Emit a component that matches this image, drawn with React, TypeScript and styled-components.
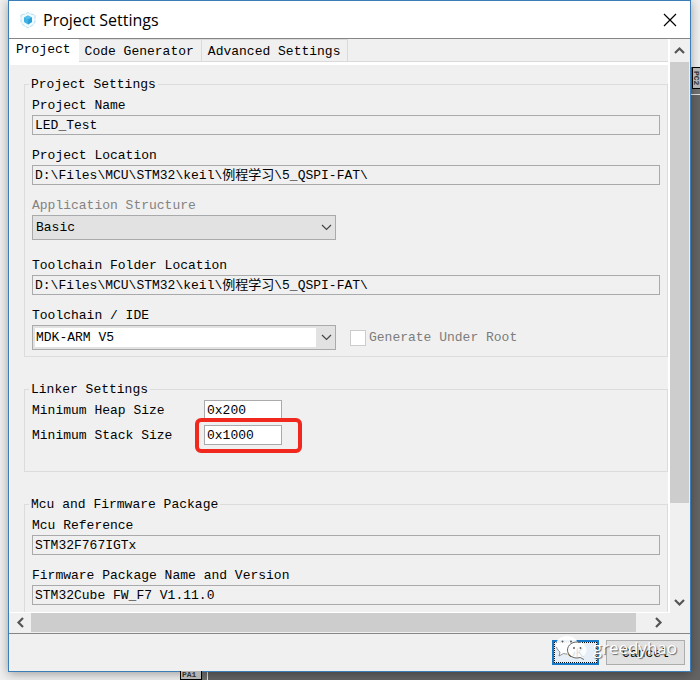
import React, { ReactNode } from "react";
import styled, { createGlobalStyle } from "styled-components";

const mono = `"Liberation Mono", "Noto Sans CJK SC", monospace`;
const ui = `"Open Sans", "Noto Sans", sans-serif`;

const GlobalStyle = createGlobalStyle`
  *, *::before, *::after { box-sizing: border-box; }
  body { margin: 0; }
  button, input, select { font: inherit; color: inherit; margin: 0; }
`;

const Desktop = styled.div`
  position: relative;
  display: flex;
  flex-direction: column;
  height: 100vh;
  min-height: 400px;
  padding: 0 9px 8px 8px;
  overflow: hidden;
  background: #f0f0f0;
  font: 13px/20px ${mono};
  color: #000;
`;

const Chip = styled.div`
  position: absolute;
  top: 94px;
  left: 207px;
  right: 0;
  bottom: 0;
  border: solid #e4e4e4;
  border-width: 1px 0 0 1px;
  background: #646464;
`;

const PinEdge = styled.div<{ $side: "right" | "bottom" }>`
  position: absolute;
  background: #707070;
  ${(p) =>
    p.$side === "right"
      ? "top: 67px; right: 0; width: 9px; height: 27px;"
      : "left: 180px; bottom: 0; width: 27px; height: 9px;"}
`;

const Pin = styled.div<{ $side: "right" | "bottom" }>`
  position: absolute;
  border: 1px solid #000;
  background: #b4b4b4;
  color: #333;
  font: bold 8px/8px ${mono};
  ${(p) =>
    p.$side === "right"
      ? "top: 67px; right: 0; width: 8px; height: 22px; border-right: 0; padding: 3px 0 0; writing-mode: vertical-rl; line-height: 7px;"
      : "left: 180px; bottom: 0; width: 22px; height: 9px; padding: 0 1px; border-top: 0;"}
`;

const Dialog = styled.section`
  position: relative;
  flex: 1;
  min-height: 0;
  display: flex;
  flex-direction: column;
  border: 1px solid #3c7fb8;
  background: #f0f0f0;
  box-shadow: 0 2px 10px rgba(0, 0, 0, 0.35);
`;

const TitleBar = styled.header`
  display: flex;
  align-items: center;
  gap: 7px;
  height: 38px;
  padding: 0 10px 0 11px;
  background: #fff;
  border-bottom: 1px solid #868686;
`;

const Title = styled.h1`
  flex: 1;
  margin: 0;
  font: 16px/20px ${ui};
  color: #000;
`;

const CloseButton = styled.button`
  display: flex;
  align-items: center;
  justify-content: center;
  width: 20px;
  height: 20px;
  padding: 0;
  border: 0;
  background: none;
`;

const Main = styled.div`
  flex: 1;
  min-height: 0;
  display: flex;
  padding-right: 1px;
  border-left: 1px solid #fff;
`;

const Viewport = styled.div`
  flex: 1;
  min-width: 0;
  display: flex;
  flex-direction: column;
  overflow: hidden;
  border-right: 2px solid #fff;
  border-bottom: 1px solid #fff;
`;

const Tabs = styled.div`
  display: flex;
  flex-shrink: 0;
  height: 26px;
  border-bottom: 3px solid #fff;
`;

const Tab = styled.button<{ $active?: boolean }>`
  height: 23px;
  padding: ${(p) => (p.$active ? "0 8px 2px 6px" : "2px 7px 0 6px")};
  border: solid #dadada;
  border-width: ${(p) => (p.$active ? "0" : "1px 1px 1px 0")};
  background: ${(p) => (p.$active ? "#fff" : "#f0f0f0")};
  line-height: 20px;
  white-space: nowrap;
`;

const TabRule = styled.div`
  flex: 1;
  height: 23px;
  border-bottom: 1px solid #dadada;
`;

const Page = styled.form`
  flex: 1;
  min-height: 0;
  display: flex;
  flex-direction: column;
  gap: 22px;
  padding: 9px 0 0 14px;
  overflow: hidden;
`;

const Group = styled.fieldset<{ $bottom: number }>`
  flex-shrink: 0;
  min-width: 0;
  margin: 0;
  padding: 1px 7px ${(p) => p.$bottom}px;
  border: 1px solid #dcdcdc;
`;

const Legend = styled.legend`
  margin-left: -3px;
  padding: 0 2px;
  height: 20px;
  line-height: 22px;
`;

const Fields = styled.div<{ $gap: number }>`
  display: flex;
  flex-direction: column;
  gap: ${(p) => p.$gap}px;
`;

const Stack = styled.div<{ $extra?: number }>`
  display: flex;
  flex-direction: column;
  margin-bottom: ${(p) => p.$extra ?? 0}px;
`;

const Label = styled.label<{ $muted?: boolean }>`
  height: 20px;
  color: ${(p) => (p.$muted ? "#838383" : "inherit")};
  line-height: 22px;
`;

const TextBox = styled.input<{ $editable?: boolean }>`
  width: ${(p) => (p.$editable ? "78px" : "100%")};
  height: 20px;
  padding: 1px 2px 0;
  border: 1px solid #a8aaac;
  border-radius: 0;
  background: ${(p) => (p.$editable ? "#fff" : "#f0f0f0")};
  outline: 0;
`;

const Row = styled.div`
  position: relative;
  display: flex;
  align-items: center;
`;

const SizeLabel = styled(Label)`
  width: 172px;
`;

const Highlight = styled.div`
  position: absolute;
  left: 163px;
  top: -7px;
  width: 107px;
  height: 35px;
  border: 4px solid #f0281e;
  border-radius: 6px;
  pointer-events: none;
`;

const Combo = styled.div<{ $white?: boolean }>`
  display: flex;
  align-items: center;
  width: 304px;
  height: 25px;
  padding: 2px;
  border: 1px solid #a8aaac;
  background: #e2e2e2;

  select {
    flex: 1;
    height: 19px;
    padding: 0 1px;
    appearance: none;
    border: 0;
    border-radius: 0;
    outline: 0;
    opacity: 1;
    color: #000;
    background: ${(p) => (p.$white ? "#fff" : "transparent")};
  }

  svg {
    margin: 0 0 0 4px;
  }
`;

const CheckLabel = styled.label`
  display: flex;
  align-items: center;
  gap: 3px;
  margin-left: 14px;
  color: #7c7c7c;
`;

const CheckBox = styled.input`
  appearance: none;
  width: 16px;
  height: 16px;
  border: 1px solid #ccc;
  background: #fff;
`;

const ScrollBar = styled.div<{ $horizontal?: boolean }>`
  flex-shrink: 0;
  display: flex;
  flex-direction: ${(p) => (p.$horizontal ? "row" : "column")};
  ${(p) =>
    p.$horizontal
      ? "height: 21px; padding: 0 22px 1px 0; border-bottom: 1px solid #868686;"
      : "width: 19px;"}
`;

const ScrollButton = styled.button<{ $size: number }>`
  flex: 0 0 ${(p) => p.$size}px;
  display: flex;
  align-items: center;
  justify-content: center;
  padding: 0;
  border: 0;
  background: #f0f0f0;
`;

const Thumb = styled.div<{ $grow: number }>`
  flex: ${(p) => p.$grow} 1 0;
  background: #cdcdcd;
`;

const Track = styled.div<{ $grow: number }>`
  flex: ${(p) => p.$grow} 1 0;
`;

const Footer = styled.footer`
  display: flex;
  flex-shrink: 0;
  justify-content: flex-end;
  gap: 7px;
  height: 37px;
  padding: 6px 5px;
`;

const DialogButton = styled.button<{ $primary?: boolean }>`
  width: ${(p) => (p.$primary ? 47 : 79)}px;
  height: 25px;
  padding: 2px 0 0;
  border: ${(p) => (p.$primary ? "2px solid #1878c8" : "1px solid #adadad")};
  background: ${(p) => (p.$primary ? "#e6eff7" : "#e1e1e1")};
  outline: ${(p) => (p.$primary ? "1px dotted #111" : "0")};
  outline-offset: -3px;
`;

const Watermark = styled.div`
  position: absolute;
  right: 13px;
  bottom: 7px;
  display: flex;
  align-items: center;
  gap: 4px;
  color: #fff;
  font: 17px/32px ${ui};
  text-shadow: 1px 1px 1px #666;
  pointer-events: none;
`;

const arrows = {
  up: "M2 9 L6.500 4.500 L11 9",
  down: "M2 4 L6.500 8.500 L11 4",
  left: "M9 2 L4.500 6.500 L9 11",
  right: "M4 2 L8.500 6.500 L4 11",
};

const Arrow = ({ dir, thin }: { dir: keyof typeof arrows; thin?: boolean }) => (
  <svg width="13" height="13" viewBox="0 0 13 13" fill="none" aria-hidden="true">
    <path d={arrows[dir]} stroke={thin ? "#444" : "#555"} strokeWidth={thin ? 1.2 : 2.2} />
  </svg>
);

const CubeLogo = () => (
  <svg width="16" height="18" viewBox="0 0 16 18" aria-hidden="true">
    <path d="M1 4 L5 3 L8 1.500 L11 3 L15 4 V11 L13 14 L8 17 L3 14 L1 11 Z" fill="#f1fafe" stroke="#b5dff2" strokeWidth="1" strokeDasharray="4 1" />
    <path d="M8 4.500 L12 6.500 V11 L8 13.500 L4 11 V6.500 Z" fill="#40b2e4" />
    <path d="M8 4.500 L12 6.500 L8 8.500 L4 6.500 Z" fill="#5ac0ea" />
    <path d="M8 8.500 V13.500 L12 11 V6.500 Z" fill="#2b9fd6" />
  </svg>
);

const ChatLogo = () => (
  <svg width="34" height="28" viewBox="0 0 34 28" aria-hidden="true">
    <path d="M12 2 C5.500 2 1 6 1 11 C1 14 2.600 16.500 5 18 L4 22 L8.500 19.500 C9.600 19.800 10.800 20 12 20 C18.500 20 23 16 23 11 C23 6 18.500 2 12 2 Z" fill="#fff" fillOpacity="0.92" />
    <path d="M1.500 13 C2.300 15.500 3.500 17 5 18 L4 22 L8.500 19.500 C10 20 11 20 12.500 20" fill="none" stroke="#777" strokeWidth="0.8" />
    <path d="M22 8 C16.500 8 12.500 11.500 12.500 16 C12.500 20.500 16.500 24 22 24 C23.200 24 24.300 23.800 25.300 23.500 L29 25.500 L28.200 22.200 C30.300 20.700 31.500 18.500 31.500 16 C31.500 11.500 27.500 8 22 8 Z" fill="#fff" fillOpacity="0.88" />
    <path d="M25 8.500 C18 6.500 12.500 11 12.500 16 C12.500 20.500 16.500 24 22 24 L25.300 23.500 L29 25.500" fill="none" stroke="#555" strokeWidth="0.9" />
    <g fill="#555">
      <circle cx="7.500" cy="7.500" r="1" />
      <circle cx="16" cy="7.500" r="1" />
      <circle cx="19" cy="14" r="0.900" />
      <circle cx="25.500" cy="14" r="0.900" />
    </g>
  </svg>
);

const ReadOnlyField = ({ id, label, value }: { id: string; label: string; value: string }) => (
  <Stack>
    <Label htmlFor={id}>{label}</Label>
    <TextBox id={id} defaultValue={value} readOnly />
  </Stack>
);

const SizeField = ({ id, label, value, children }: { id: string; label: string; value: string; children?: ReactNode }) => (
  <Row>
    <SizeLabel htmlFor={id}>{label}</SizeLabel>
    <TextBox id={id} defaultValue={value} $editable />
    {children}
  </Row>
);

export default function App() {
  const folder = "D:\\Files\\MCU\\STM32\\keil\\例程学习\\5_QSPI-FAT\\";
  return (
    <>
      <GlobalStyle />
      <Desktop>
        <Chip />
        <PinEdge $side="right" />
        <PinEdge $side="bottom" />
        <Dialog role="dialog" aria-labelledby="dialog-title">
          <TitleBar>
            <CubeLogo />
            <Title id="dialog-title">Project Settings</Title>
            <CloseButton type="button" aria-label="Close">
              <svg width="14" height="14" viewBox="0 0 14 14" aria-hidden="true">
                <path d="M1 1 L13 13 M13 1 L1 13" stroke="#000" strokeWidth="1.2" />
              </svg>
            </CloseButton>
          </TitleBar>
          <Main>
            <Viewport>
              <Tabs role="tablist">
                <Tab type="button" role="tab" aria-selected="true" $active>Project</Tab>
                <Tab type="button" role="tab" aria-selected="false">Code Generator</Tab>
                <Tab type="button" role="tab" aria-selected="false">Advanced Settings</Tab>
                <TabRule />
              </Tabs>
              <Page>
                <Group $bottom={6}>
                  <Legend>Project Settings</Legend>
                  <Fields $gap={10}>
                    <ReadOnlyField id="name" label="Project Name" value="LED_Test" />
                    <ReadOnlyField id="location" label="Project Location" value={folder} />
                    <Stack $extra={5}>
                      <Label htmlFor="structure" $muted>Application Structure</Label>
                      <Combo>
                        <select id="structure" disabled>
                          <option>Basic</option>
                        </select>
                        <Arrow dir="down" thin />
                      </Combo>
                    </Stack>
                    <ReadOnlyField id="toolchain-folder" label="Toolchain Folder Location" value={folder} />
                    <Stack>
                      <Label htmlFor="toolchain">Toolchain / IDE</Label>
                      <Row>
                        <Combo $white>
                          <select id="toolchain">
                            <option>MDK-ARM V5</option>
                          </select>
                          <Arrow dir="down" thin />
                        </Combo>
                        <CheckLabel>
                          <CheckBox type="checkbox" disabled />
                          Generate Under Root
                        </CheckLabel>
                      </Row>
                    </Stack>
                  </Fields>
                </Group>
                <Group $bottom={26}>
                  <Legend>Linker Settings</Legend>
                  <Fields $gap={5}>
                    <SizeField id="heap" label="Minimum Heap Size" value="0x200" />
                    <SizeField id="stack" label="Minimum Stack Size" value="0x1000">
                      <Highlight />
                    </SizeField>
                  </Fields>
                </Group>
                <Group $bottom={26}>
                  <Legend>Mcu and Firmware Package</Legend>
                  <Fields $gap={10}>
                    <ReadOnlyField id="mcu" label="Mcu Reference" value="STM32F767IGTx" />
                    <ReadOnlyField id="firmware" label="Firmware Package Name and Version" value="STM32Cube FW_F7 V1.11.0" />
                  </Fields>
                </Group>
              </Page>
            </Viewport>
            <ScrollBar>
              <ScrollButton type="button" aria-label="Scroll up" $size={23}><Arrow dir="up" /></ScrollButton>
              <Thumb $grow={440} />
              <Track $grow={88} />
              <ScrollButton type="button" aria-label="Scroll down" $size={22}><Arrow dir="down" /></ScrollButton>
            </ScrollBar>
          </Main>
          <ScrollBar $horizontal>
            <ScrollButton type="button" aria-label="Scroll left" $size={22}><Arrow dir="left" /></ScrollButton>
            <Thumb $grow={605} />
            <Track $grow={12} />
            <ScrollButton type="button" aria-label="Scroll right" $size={20}><Arrow dir="right" /></ScrollButton>
          </ScrollBar>
          <Footer>
            <DialogButton type="button" $primary>OK</DialogButton>
            <DialogButton type="button">Cancel</DialogButton>
          </Footer>
          <Watermark>
            <ChatLogo />
            greedyhao
          </Watermark>
        </Dialog>
        <Pin $side="right">PC2</Pin>
        <Pin $side="bottom">PA1</Pin>
      </Desktop>
    </>
  );
}
